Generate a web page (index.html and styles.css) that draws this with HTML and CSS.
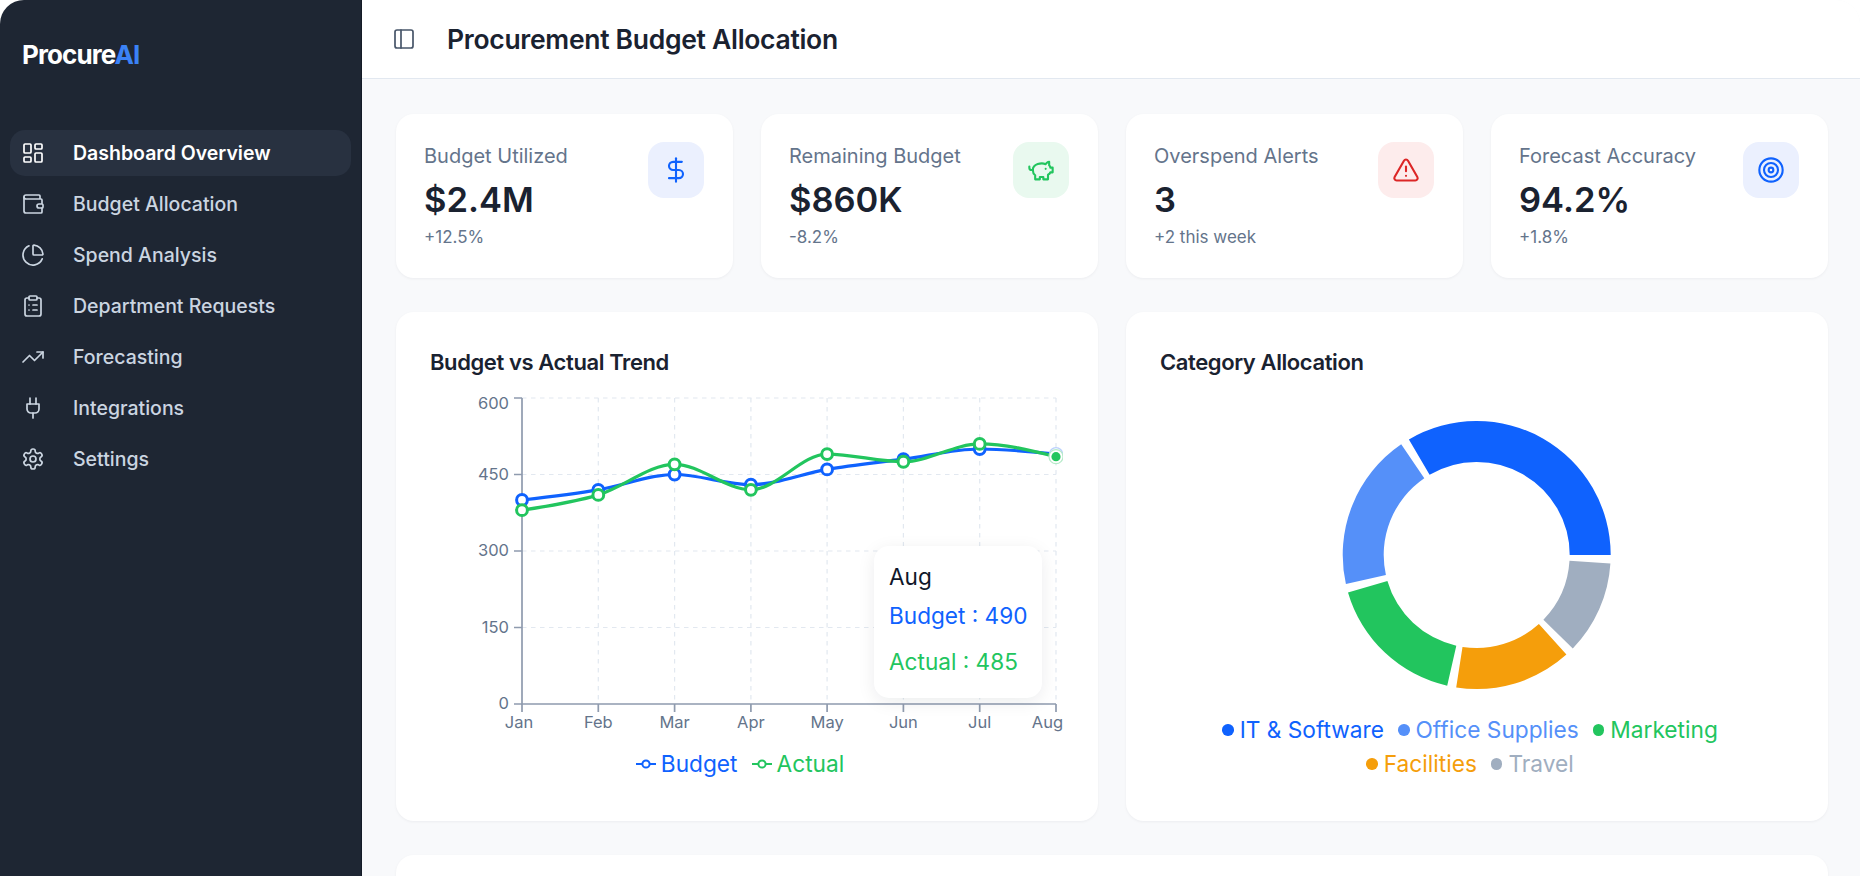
FILE: index.html
```html
<!DOCTYPE html>
<html lang="en">
<head>
<meta charset="utf-8">
<title>Procurement Budget Allocation</title>
<link rel="stylesheet" href="styles.css">
</head>
<body>
<div class="app">
  <aside class="sidebar">
    <div class="logo">Procure<span class="logo-ai">AI</span></div>
    <nav class="nav">
      <a class="nav-item active"><svg class="nav-icon" viewBox="0 0 24 24"><rect width="7" height="9" x="3" y="3" rx="1"/><rect width="7" height="5" x="14" y="3" rx="1"/><rect width="7" height="9" x="14" y="12" rx="1"/><rect width="7" height="5" x="3" y="16" rx="1"/></svg>Dashboard Overview</a>
      <a class="nav-item"><svg class="nav-icon" viewBox="0 0 24 24"><path d="M19 7V4a1 1 0 0 0-1-1H5a2 2 0 0 0 0 4h15a1 1 0 0 1 1 1v4h-3a2 2 0 0 0 0 4h3a1 1 0 0 0 1-1v-2a1 1 0 0 0-1-1"/><path d="M3 5v14a2 2 0 0 0 2 2h15a1 1 0 0 0 1-1v-4"/></svg>Budget Allocation</a>
      <a class="nav-item"><svg class="nav-icon" viewBox="0 0 24 24"><path d="M21 12c.552 0 1.005-.449.95-.998a10 10 0 0 0-8.953-8.951c-.55-.055-.998.398-.998.95v8a1 1 0 0 0 1 1z"/><path d="M21.21 15.89A10 10 0 1 1 8 2.83"/></svg>Spend Analysis</a>
      <a class="nav-item"><svg class="nav-icon" viewBox="0 0 24 24"><rect width="8" height="4" x="8" y="2" rx="1" ry="1"/><path d="M16 4h2a2 2 0 0 1 2 2v14a2 2 0 0 1-2 2H6a2 2 0 0 1-2-2V6a2 2 0 0 1 2-2h2"/><path d="M12 11h4"/><path d="M12 16h4"/><path d="M8 11h.01"/><path d="M8 16h.01"/></svg>Department Requests</a>
      <a class="nav-item"><svg class="nav-icon" viewBox="0 0 24 24"><path d="M16 7h6v6"/><path d="m22 7-8.5 8.5-5-5L2 17"/></svg>Forecasting</a>
      <a class="nav-item"><svg class="nav-icon" viewBox="0 0 24 24"><path d="M12 22v-5"/><path d="M9 8V2"/><path d="M15 8V2"/><path d="M18 8v5a4 4 0 0 1-4 4h-4a4 4 0 0 1-4-4V8Z"/></svg>Integrations</a>
      <a class="nav-item"><svg class="nav-icon" viewBox="0 0 24 24"><path d="M12.22 2h-.44a2 2 0 0 0-2 2v.18a2 2 0 0 1-1 1.73l-.43.25a2 2 0 0 1-2 0l-.15-.08a2 2 0 0 0-2.73.73l-.22.38a2 2 0 0 0 .73 2.73l.15.1a2 2 0 0 1 1 1.72v.51a2 2 0 0 1-1 1.74l-.15.09a2 2 0 0 0-.73 2.73l.22.38a2 2 0 0 0 2.73.73l.15-.08a2 2 0 0 1 2 0l.43.25a2 2 0 0 1 1 1.73V20a2 2 0 0 0 2 2h.44a2 2 0 0 0 2-2v-.18a2 2 0 0 1 1-1.73l.43-.25a2 2 0 0 1 2 0l.15.08a2 2 0 0 0 2.73-.73l.22-.39a2 2 0 0 0-.73-2.73l-.15-.08a2 2 0 0 1-1-1.74v-.5a2 2 0 0 1 1-1.74l.15-.09a2 2 0 0 0 .73-2.73l-.22-.38a2 2 0 0 0-2.73-.73l-.15.08a2 2 0 0 1-2 0l-.43-.25a2 2 0 0 1-1-1.73V4a2 2 0 0 0-2-2z"/><circle cx="12" cy="12" r="3"/></svg>Settings</a>
    </nav>
  </aside>
  <div class="main">
    <header class="header">
      <svg class="panel-icon" viewBox="0 0 24 24"><rect width="18" height="18" x="3" y="3" rx="2"/><path d="M9 3v18"/></svg>
      <h1 class="title">Procurement Budget Allocation</h1>
    </header>
    <div class="content">
      <section class="stats">
        <div class="card stat">
          <div><div class="stat-label">Budget Utilized</div><div class="stat-value">$2.4M</div><div class="stat-sub">+12.5%</div></div>
          <div class="stat-icon tint-blue"><svg viewBox="0 0 24 24"><line x1="12" x2="12" y1="2" y2="22"/><path d="M17 5H9.5a3.5 3.5 0 0 0 0 7h5a3.5 3.5 0 0 1 0 7H6"/></svg></div>
        </div>
        <div class="card stat">
          <div><div class="stat-label">Remaining Budget</div><div class="stat-value">$860K</div><div class="stat-sub">-8.2%</div></div>
          <div class="stat-icon tint-green"><svg viewBox="0 0 24 24"><path d="M19 5c-1.5 0-2.8 1.4-3 2-3.5-1.5-11-.3-11 5 0 1.8 0 3 2 4.5V20h4v-2h3v2h4v-4c1-.5 1.7-1 2-2h2v-4h-2c0-1-.5-1.5-1-2V5z"/><path d="M2 9v1c0 1.1.9 2 2 2h1"/><path d="M16 11h.01"/></svg></div>
        </div>
        <div class="card stat">
          <div><div class="stat-label">Overspend Alerts</div><div class="stat-value">3</div><div class="stat-sub">+2 this week</div></div>
          <div class="stat-icon tint-red"><svg viewBox="0 0 24 24"><path d="m21.73 18-8-14a2 2 0 0 0-3.48 0l-8 14A2 2 0 0 0 4 21h16a2 2 0 0 0 1.73-3"/><path d="M12 9v4"/><path d="M12 17h.01"/></svg></div>
        </div>
        <div class="card stat">
          <div><div class="stat-label">Forecast Accuracy</div><div class="stat-value">94.2%</div><div class="stat-sub">+1.8%</div></div>
          <div class="stat-icon tint-blue"><svg viewBox="0 0 24 24"><circle cx="12" cy="12" r="10"/><circle cx="12" cy="12" r="6"/><circle cx="12" cy="12" r="2"/></svg></div>
        </div>
      </section>

      <section class="charts">
        <div class="card chart-card">
          <h2 class="chart-title">Budget vs Actual Trend</h2>
          <div class="chart-wrap">
            <svg class="trend" viewBox="430 390 633 345" width="633" height="345">
              <g class="grid-lines">
                <path d="M522 398H1056M522 474.5H1056M522 551H1056M522 627.5H1056"/>
                <path d="M598.3 398V704M674.6 398V704M750.9 398V704M827.1 398V704M903.4 398V704M979.7 398V704M1056 398V704"/>
              </g>
              <g class="axis">
                <path d="M522 398V704H1056"/>
                <path d="M514 398H522M514 474.5H522M514 551H522M514 627.5H522M514 704H522"/>
                <path d="M522 704V712M598.3 704V712M674.6 704V712M750.9 704V712M827.1 704V712M903.4 704V712M979.7 704V712M1056 704V712"/>
              </g>
              <g class="tick-y">
                <text x="509" y="409">600</text>
                <text x="509" y="480">450</text>
                <text x="509" y="556">300</text>
                <text x="509" y="633">150</text>
                <text x="509" y="709">0</text>
              </g>
              <g class="tick-x">
                <text x="519" y="728">Jan</text>
                <text x="598.3" y="728">Feb</text>
                <text x="674.6" y="728">Mar</text>
                <text x="750.9" y="728">Apr</text>
                <text x="827.1" y="728">May</text>
                <text x="903.4" y="728">Jun</text>
                <text x="979.7" y="728">Jul</text>
                <text x="1047.5" y="728">Aug</text>
              </g>
              <path class="line line-blue" d="M522 500C547.4 497.03 572.9 494.05 598.3 489.8C623.7 485.55 649.2 474.5 674.6 474.5C700 474.5 725.5 484.7 750.9 484.7C776.3 484.7 801.7 473.65 827.1 469.4C852.5 465.15 878 462.6 903.4 459.2C928.8 455.8 954.3 449 979.7 449C1005.1 449 1030.6 451.55 1056 454.1"/>
              <g class="dots dots-blue">
                <circle cx="522" cy="500" r="5.4"/><circle cx="598.3" cy="489.8" r="5.4"/><circle cx="674.6" cy="474.5" r="5.4"/><circle cx="750.9" cy="484.7" r="5.4"/><circle cx="827.1" cy="469.4" r="5.4"/><circle cx="903.4" cy="459.2" r="5.4"/><circle cx="979.7" cy="449" r="5.4"/>
              </g>
              <circle class="halo-blue" cx="1056" cy="454.1" r="6.5"/>
              <path class="line line-green" d="M522 510.2C547.4 506.38 572.9 502.55 598.3 494.9C623.7 487.25 649.2 464.3 674.6 464.3C700 464.3 725.5 489.8 750.9 489.8C776.3 489.8 801.7 454.1 827.1 454.1C852.5 454.1 878 461.75 903.4 461.75C928.8 461.75 954.3 443.9 979.7 443.9C1005.1 443.9 1030.6 450.28 1056 456.65"/>
              <g class="dots dots-green">
                <circle cx="522" cy="510.2" r="5.4"/><circle cx="598.3" cy="494.9" r="5.4"/><circle cx="674.6" cy="464.3" r="5.4"/><circle cx="750.9" cy="489.8" r="5.4"/><circle cx="827.1" cy="454.1" r="5.4"/><circle cx="903.4" cy="461.75" r="5.4"/><circle cx="979.7" cy="443.9" r="5.4"/>
              </g>
              <circle class="halo-green" cx="1056" cy="456.65" r="7"/>
              <circle class="active-green" cx="1056" cy="456.65" r="4.6"/>
            </svg>
            <div class="tooltip">
              <div class="tooltip-head">Aug</div>
              <div class="tooltip-row c-blue">Budget : 490</div>
              <div class="tooltip-row c-green">Actual : 485</div>
            </div>
          </div>
          <div class="legend trend-legend">
            <span class="legend-item c-blue"><svg class="legend-line" viewBox="0 0 20 12"><path d="M0 6H6M14 6H20"/><circle cx="10" cy="6" r="3.6"/></svg>Budget</span>
            <span class="legend-item c-green"><svg class="legend-line" viewBox="0 0 20 12"><path d="M0 6H6M14 6H20"/><circle cx="10" cy="6" r="3.6"/></svg>Actual</span>
          </div>
        </div>

        <div class="card chart-card">
          <h2 class="chart-title">Category Allocation</h2>
          <svg class="donut" viewBox="1160 390 633 323" width="633" height="323">
            <path class="seg-1" d="M1610.7 555A134 134 0 0 0 1408.9 439.4L1429.6 474.8A93 93 0 0 1 1569.7 555Z"/>
            <path class="seg-2" d="M1401.2 444.3A134 134 0 0 0 1345.9 584L1385.9 575.1A93 93 0 0 1 1424.3 478.2Z"/>
            <path class="seg-3" d="M1348 592.4A134 134 0 0 0 1447.2 685.7L1456.3 645.7A93 93 0 0 1 1387.4 580.9Z"/>
            <path class="seg-4" d="M1456.2 687.4A134 134 0 0 0 1566.4 654.6L1538.9 624.1A93 93 0 0 1 1462.5 646.9Z"/>
            <path class="seg-5" d="M1572.8 648.4A134 134 0 0 0 1610.4 563.4L1569.5 560.8A93 93 0 0 1 1543.4 619.8Z"/>
          </svg>
          <div class="legend donut-legend">
            <span class="legend-item c-blue"><i class="dot bg-blue"></i>IT &amp; Software</span>
            <span class="legend-item c-light"><i class="dot bg-light"></i>Office Supplies</span>
            <span class="legend-item c-green"><i class="dot bg-green"></i>Marketing</span>
            <span class="legend-item c-orange"><i class="dot bg-orange"></i>Facilities</span>
            <span class="legend-item c-grey"><i class="dot bg-grey"></i>Travel</span>
          </div>
        </div>
      </section>

      <section class="card bottom-card"></section>
    </div>
  </div>
</div>
</body>
</html>
```

FILE: styles.css
```css
* { box-sizing: border-box; }
html, body { margin: 0; height: 100%; overflow: hidden; background: #fff; }
body { font-family: Inter, "Liberation Sans", sans-serif; color: #0f172a; }

.app { display: flex; height: 100vh; overflow: hidden; border-radius: 24px 24px 0 0; }

.sidebar { flex: 0 0 362px; background: #1e2633; border-right: 1px solid #141b26; padding: 0 10px; }
.logo { height: 130px; padding: 39px 12px 0; font-size: 26px; line-height: 32px; font-weight: 700; letter-spacing: -0.9px; color: #fff; }
.logo-ai { color: #3b82f6; }
.nav { display: flex; flex-direction: column; gap: 5px; }
.nav-item { display: flex; align-items: center; gap: 28px; height: 46px; padding-left: 11px; border-radius: 15px; font-size: 19.5px; font-weight: 500; color: #cbd5e1; }
.nav-item.active { background: #283140; color: #fff; font-weight: 600; }
.nav-icon { width: 24px; height: 24px; flex: none; fill: none; stroke: currentColor; stroke-width: 1.7; stroke-linecap: round; stroke-linejoin: round; }

.main { flex: 1; min-width: 0; background: #f8f9fb; display: flex; flex-direction: column; }
.header { flex: 0 0 79px; display: flex; align-items: center; gap: 31px; padding: 0 0 0 30px; background: #fff; border-bottom: 1px solid #e2e8f0; }
.panel-icon { width: 24px; height: 24px; fill: none; stroke: #475569; stroke-width: 1.7; stroke-linecap: round; stroke-linejoin: round; }
.title { margin: 0; font-size: 26.5px; font-weight: 600; letter-spacing: -0.3px; color: #1a2230; }

.content { padding: 35px 32px 0 34px; display: flex; flex-direction: column; gap: 34px; }
.card { background: #fff; border-radius: 18px; box-shadow: 0 1px 3px rgba(15, 23, 42, 0.05); }

.stats { display: grid; grid-template-columns: repeat(4, 1fr); gap: 28px; }
.stat { height: 164px; padding: 28px 29px 0 28px; display: flex; justify-content: space-between; align-items: flex-start; }
.stat-label { font-size: 20px; line-height: 28px; color: #64748b; }
.stat-value { margin-top: 8px; font-size: 34.5px; line-height: 44px; font-weight: 600; color: #1a2230; }
.stat-sub { margin-top: 3px; font-size: 17px; line-height: 24px; color: #64748b; }
.stat-icon { width: 56px; height: 56px; flex: none; border-radius: 16px; display: flex; align-items: center; justify-content: center; }
.stat-icon svg { width: 28px; height: 28px; fill: none; stroke: currentColor; stroke-width: 1.8; stroke-linecap: round; stroke-linejoin: round; }
.tint-blue { background: #ebf0fe; color: #0f62fe; }
.tint-green { background: #e9f9ef; color: #22c55e; }
.tint-red { background: #fdecec; color: #dc2626; }

.charts { display: grid; grid-template-columns: 1fr 1fr; gap: 28px; }
.chart-card { height: 509px; padding: 33px 34px 0; }
.chart-title { margin: 0 0 11px; font-size: 22px; line-height: 34px; font-weight: 600; letter-spacing: -0.4px; color: #1a2230; }
.chart-wrap { position: relative; height: 345px; }
.trend, .donut { display: block; }

.grid-lines path { fill: none; stroke: #e2e8f0; stroke-width: 1.2; stroke-dasharray: 4.5 4.5; }
.axis path { fill: none; stroke: #8f9bae; stroke-width: 1.7; }
.tick-y text, .tick-x text { font-family: Inter, sans-serif; font-size: 16.5px; fill: #64748b; }
.tick-y text { text-anchor: end; }
.tick-x text { text-anchor: middle; }
.line { fill: none; stroke-width: 3.2; }
.line-blue { stroke: #0f62fe; }
.line-green { stroke: #22c55e; }
.dots circle { fill: #fff; stroke-width: 3; }
.dots-blue circle { stroke: #0f62fe; }
.dots-green circle { stroke: #22c55e; }
.halo-blue { fill: #fff; stroke: #b9d0fc; stroke-width: 1.4; }
.halo-green { fill: #fff; stroke: #b6eac9; stroke-width: 1.2; }
.active-green { fill: #22c55e; }

.tooltip { position: absolute; left: 444px; top: 156px; width: 168px; height: 152px; padding: 15px 15px 0; background: #fff; border-radius: 15px; box-shadow: 0 4px 18px rgba(15, 23, 42, 0.08); font-size: 22.6px; white-space: nowrap; }
.tooltip-head { line-height: 32px; color: #0f172a; margin-bottom: 7px; }
.tooltip-row { line-height: 32px; margin-bottom: 14px; }

.legend { display: flex; flex-wrap: wrap; justify-content: center; font-size: 22.7px; line-height: 34px; }
.legend-item { display: inline-flex; align-items: center; margin-right: 14px; }
.trend-legend { padding-top: 12px; }
.legend-line { width: 20px; height: 12px; margin-right: 5px; fill: #fff; stroke: currentColor; stroke-width: 2; }
.dot { width: 11.5px; height: 11.5px; border-radius: 50%; margin-right: 6px; }

.donut-legend { margin: 0 20px; }

.seg-1 { fill: #0f62fe; }
.seg-2 { fill: #5590f9; }
.seg-3 { fill: #22c55e; }
.seg-4 { fill: #f59e0b; }
.seg-5 { fill: #a0aec0; }
.c-blue { color: #0f62fe; }
.c-light { color: #5590f9; }
.c-green { color: #22c55e; }
.c-orange { color: #f59e0b; }
.c-grey { color: #a0aec0; }
.bg-blue { background: #0f62fe; }
.bg-light { background: #5590f9; }
.bg-green { background: #22c55e; }
.bg-orange { background: #f59e0b; }
.bg-grey { background: #a0aec0; }

.bottom-card { flex: none; height: 200px; }
```
